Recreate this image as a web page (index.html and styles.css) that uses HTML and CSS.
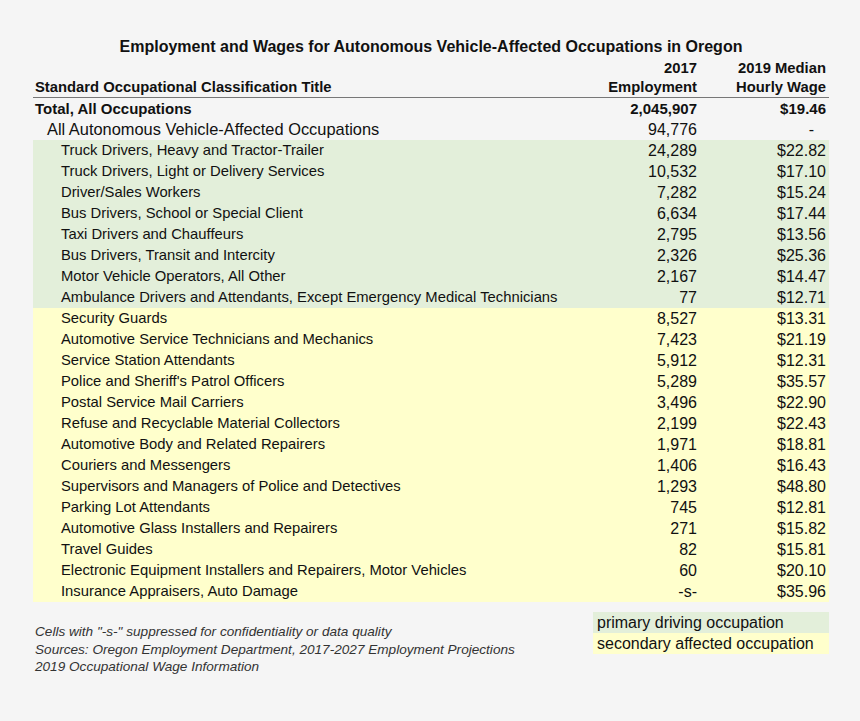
FILE: index.html
```html
<!DOCTYPE html>
<html>
<head>
<meta charset="utf-8">
<link rel="stylesheet" href="styles.css">
</head>
<body>
<div class="page">
  <h1 class="title">Employment and Wages for Autonomous Vehicle-Affected Occupations in Oregon</h1>
  <div class="table">
    <div class="row head">
      <div class="c1"></div>
      <div class="c2">2017</div>
      <div class="c3">2019 Median</div>
    </div>
    <div class="row head head2">
      <div class="c1">Standard Occupational Classification Title</div>
      <div class="c2">Employment</div>
      <div class="c3">Hourly Wage</div>
    </div>
    <div class="row total">
      <div class="c1">Total, All Occupations</div>
      <div class="c2">2,045,907</div>
      <div class="c3">$19.46</div>
    </div>
    <div class="row all">
      <div class="c1">All Autonomous Vehicle-Affected Occupations</div>
      <div class="c2">94,776</div>
      <div class="c3 dash">-</div>
    </div>
    <div class="row sub g"><div class="c1">Truck Drivers, Heavy and Tractor-Trailer</div><div class="c2">24,289</div><div class="c3">$22.82</div></div>
    <div class="row sub g"><div class="c1">Truck Drivers, Light or Delivery Services</div><div class="c2">10,532</div><div class="c3">$17.10</div></div>
    <div class="row sub g"><div class="c1">Driver/Sales Workers</div><div class="c2">7,282</div><div class="c3">$15.24</div></div>
    <div class="row sub g"><div class="c1">Bus Drivers, School or Special Client</div><div class="c2">6,634</div><div class="c3">$17.44</div></div>
    <div class="row sub g"><div class="c1">Taxi Drivers and Chauffeurs</div><div class="c2">2,795</div><div class="c3">$13.56</div></div>
    <div class="row sub g"><div class="c1">Bus Drivers, Transit and Intercity</div><div class="c2">2,326</div><div class="c3">$25.36</div></div>
    <div class="row sub g"><div class="c1">Motor Vehicle Operators, All Other</div><div class="c2">2,167</div><div class="c3">$14.47</div></div>
    <div class="row sub g"><div class="c1">Ambulance Drivers and Attendants, Except Emergency Medical Technicians</div><div class="c2">77</div><div class="c3">$12.71</div></div>
    <div class="row sub y"><div class="c1">Security Guards</div><div class="c2">8,527</div><div class="c3">$13.31</div></div>
    <div class="row sub y"><div class="c1">Automotive Service Technicians and Mechanics</div><div class="c2">7,423</div><div class="c3">$21.19</div></div>
    <div class="row sub y"><div class="c1">Service Station Attendants</div><div class="c2">5,912</div><div class="c3">$12.31</div></div>
    <div class="row sub y"><div class="c1">Police and Sheriff's Patrol Officers</div><div class="c2">5,289</div><div class="c3">$35.57</div></div>
    <div class="row sub y"><div class="c1">Postal Service Mail Carriers</div><div class="c2">3,496</div><div class="c3">$22.90</div></div>
    <div class="row sub y"><div class="c1">Refuse and Recyclable Material Collectors</div><div class="c2">2,199</div><div class="c3">$22.43</div></div>
    <div class="row sub y"><div class="c1">Automotive Body and Related Repairers</div><div class="c2">1,971</div><div class="c3">$18.81</div></div>
    <div class="row sub y"><div class="c1">Couriers and Messengers</div><div class="c2">1,406</div><div class="c3">$16.43</div></div>
    <div class="row sub y"><div class="c1">Supervisors and Managers of Police and Detectives</div><div class="c2">1,293</div><div class="c3">$48.80</div></div>
    <div class="row sub y"><div class="c1">Parking Lot Attendants</div><div class="c2">745</div><div class="c3">$12.81</div></div>
    <div class="row sub y"><div class="c1">Automotive Glass Installers and Repairers</div><div class="c2">271</div><div class="c3">$15.82</div></div>
    <div class="row sub y"><div class="c1">Travel Guides</div><div class="c2">82</div><div class="c3">$15.81</div></div>
    <div class="row sub y"><div class="c1">Electronic Equipment Installers and Repairers, Motor Vehicles</div><div class="c2">60</div><div class="c3">$20.10</div></div>
    <div class="row sub y"><div class="c1">Insurance Appraisers, Auto Damage</div><div class="c2">-s-</div><div class="c3">$35.96</div></div>
  </div>
  <div class="footer">
    <div class="notes">
      <p>Cells with "-s-" suppressed for confidentiality or data quality</p>
      <p>Sources: Oregon Employment Department, 2017-2027 Employment Projections</p>
      <p>2019 Occupational Wage Information</p>
    </div>
    <div class="legend">
      <div class="key g">primary driving occupation</div>
      <div class="key y">secondary affected occupation</div>
    </div>
  </div>
</div>
</body>
</html>
```
FILE: styles.css
```css
html, body {
  margin: 0;
  padding: 0;
  background: #f5f5f5;
}
body {
  font-family: "Liberation Sans", Arial, sans-serif;
  color: #111;
  width: 860px;
  height: 721px;
  overflow: hidden;
}
.page {
  padding: 38px 31px 0 33px;
}
.title {
  margin: 0;
  font-size: 16px;
  font-weight: bold;
  text-align: center;
  line-height: 18px;
}
.table {
  display: flex;
  flex-direction: column;
}
.row {
  display: grid;
  grid-template-columns: 1fr 110px 129px;
  padding-right: 3px;
  height: 21px;
  align-items: center;
  font-size: 14.8px;
  line-height: 21px;
}
.c2, .c3 {
  text-align: right;
  white-space: nowrap;
  font-size: 16px;
}
.c1 {
  white-space: nowrap;
}
.head {
  font-weight: bold;
  height: 20px;
  line-height: 20px;
  padding-top: 2px;
}
.head,
.head .c2,
.head .c3 {
  font-size: 14.8px;
}
.head .c1 {
  padding-left: 2px;
}
.head2 {
  border-bottom: 1px solid #777;
  height: 18px;
  line-height: 18px;
  padding-top: 0;
  padding-bottom: 1px;
}
.total,
.total .c2,
.total .c3 {
  font-weight: bold;
  font-size: 15px;
}
.total .c1 {
  padding-left: 2px;
}
.all .c1 {
  font-size: 16.4px;
  padding-left: 14px;
}
.dash {
  padding-right: 12px;
}
.sub .c1 {
  padding-left: 28px;
}
.g {
  background: #e3efda;
}
.y {
  background: #ffffcc;
}
.footer {
  display: flex;
  justify-content: space-between;
  margin-top: 10px;
}
.notes {
  padding-left: 2px;
  padding-top: 11px;
  font-style: italic;
  font-size: 13.6px;
  color: #333;
}
.notes p {
  margin: 0;
  line-height: 17.5px;
}
.legend {
  width: 236px;
  display: flex;
  flex-direction: column;
}
.key {
  font-size: 16px;
  height: 21px;
  line-height: 21px;
  padding-left: 4px;
}
```
